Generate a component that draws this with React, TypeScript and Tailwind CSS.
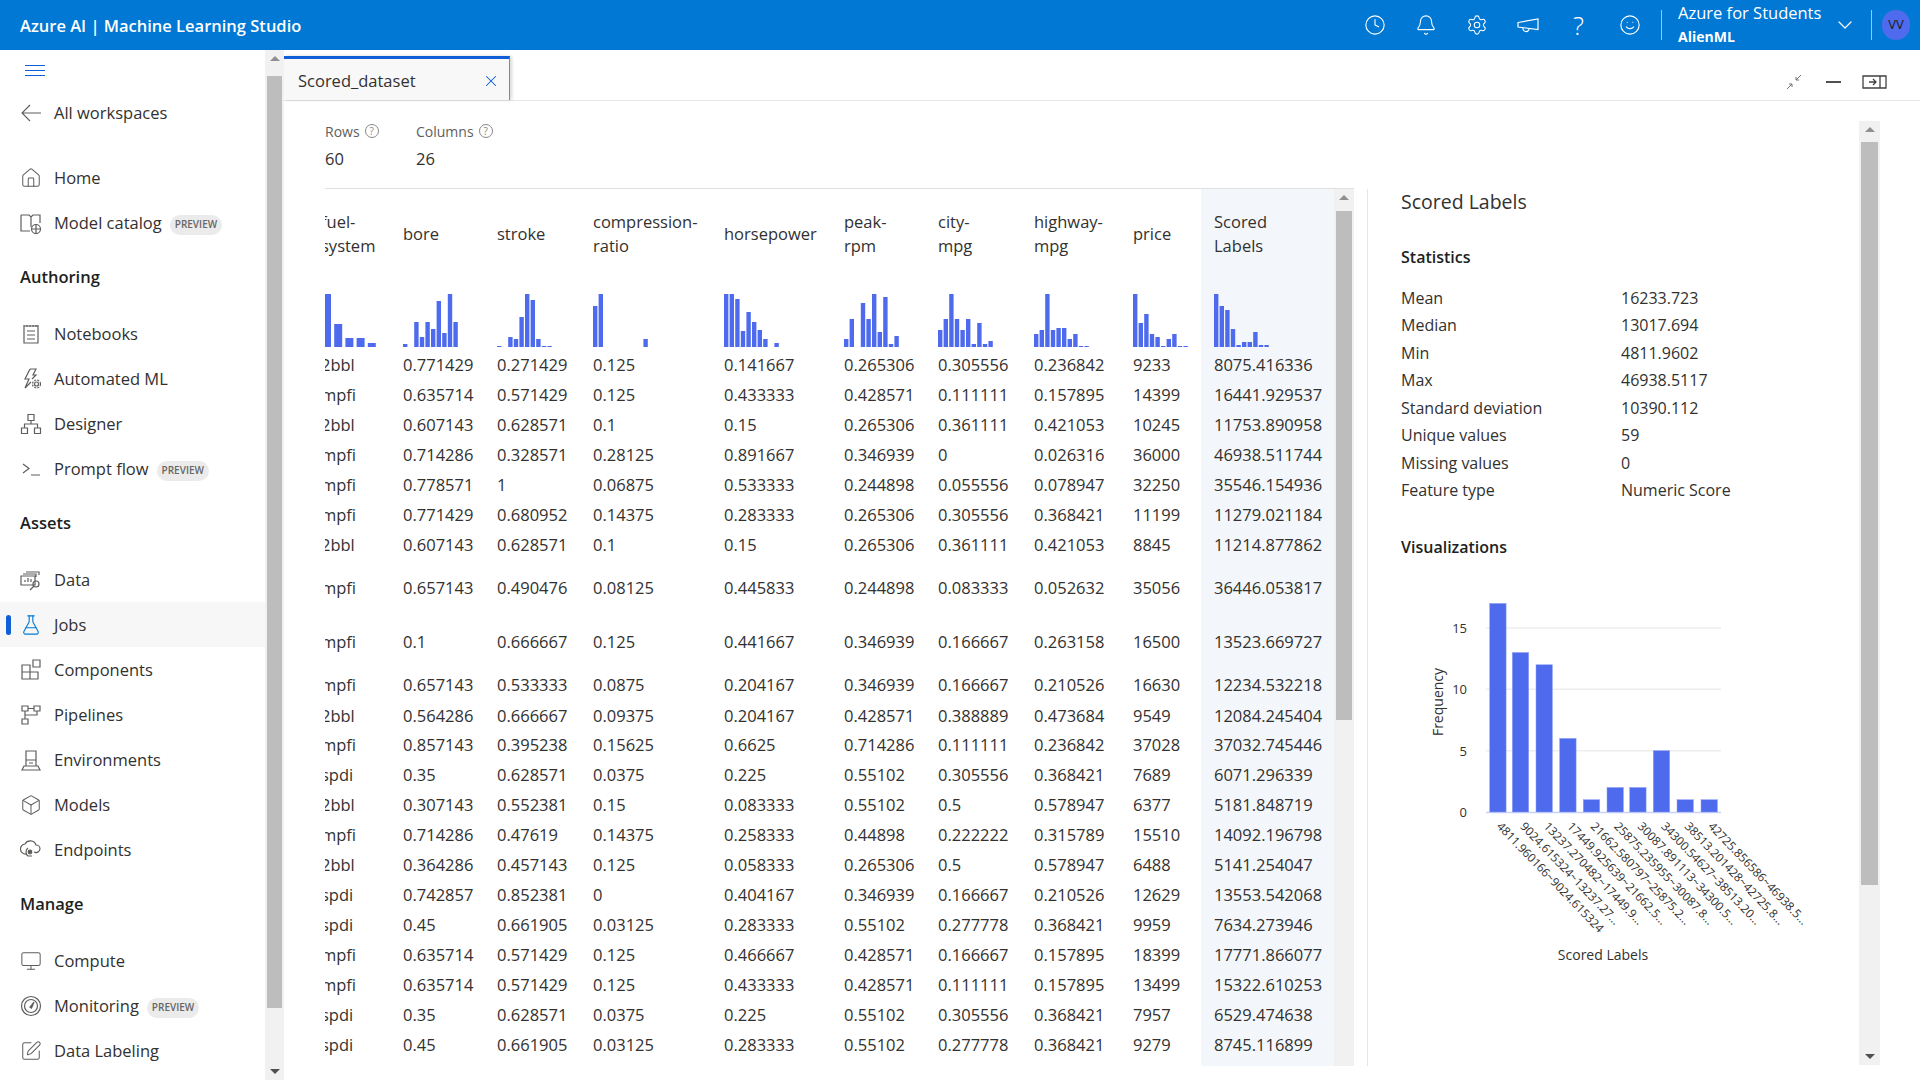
import { Clock, Bell, Settings, Smile, ChevronDown, Home, FlaskConical, Box, Monitor, SquarePen, X } from "lucide-react";
import type { ReactNode } from "react";

const ic = { fill: "none", stroke: "#5f5e5c", strokeWidth: 1.2 };

function Ico({ children }: { children: ReactNode }) {
    return (
        <svg width="22" height="22" viewBox="0 0 22 22" {...ic}>
            {children}
        </svg>
    );
}

const NotebookIcon = () => (
    <Ico>
        <path d="M4 3h14v17H4zM4 2v2M7 2v2M10 2v2M13 2v2M16 2v2M18 2v2M7 8h8M7 12h8M7 16h8" />
    </Ico>
);
const AutoMlIcon = () => (
    <Ico>
        <path d="M10 1h6l-3 6h3l-4 4M10 1L5 11h4l-4 9 6-6" />
        <circle cx="16.5" cy="16" r="2" />
        <circle cx="16.5" cy="16" r="4" strokeDasharray="2 1.2" />
    </Ico>
);
const DesignerIcon = () => (
    <Ico>
        <path d="M8 1.5h6v6H8zM1.5 15h6v5.5h-6zM14.5 15h6v5.5h-6zM11 7.5V11M4.5 15v-4h13v4" />
    </Ico>
);
const PromptIcon = () => (
    <Ico>
        <path d="M3 6l6 4.5L3 15M11 17h9" />
    </Ico>
);
const DataIcon = () => (
    <Ico>
        <path d="M6 3h13v3M3 5h13v3M1 7h14v9H1zM5 13v-2M8 13V9M11 13v-3" />
        <circle cx="16" cy="15" r="3" />
        <path d="M14 17l-4 4" />
    </Ico>
);
const ComponentsIcon = () => (
    <Ico>
        <path d="M2 6h8v7H2zM10 6v7h8v7H2v-7M10 13v7" />
        <path d="M13 1h7v7h-7z" />
    </Ico>
);
const PipelinesIcon = () => (
    <Ico>
        <path d="M2 2h6v5H2zM14 2h6v5h-6zM2 15h6v5H2zM5 7v8M8 4.5h6M5 11h12V7" />
    </Ico>
);
const EnvIcon = () => (
    <Ico>
        <path d="M6 2h10v15H6zM6 11h10M9 14h4M2 21l2-4h14l2 4z" />
    </Ico>
);
const EndpointsIcon = () => (
    <Ico>
        <path d="M6 15a5 5 0 0 1-1-10 6 6 0 0 1 11 1 4 4 0 0 1 4 4 4 4 0 0 1-6 3" />
        <path d="M8 9a5 5 0 0 0 0 8h4" />
        <circle cx="10" cy="13" r="1.8" fill="#5f5e5c" />
    </Ico>
);
const GaugeIcon = () => (
    <Ico>
        <circle cx="11" cy="11" r="9.5" />
        <circle cx="11" cy="11" r="6.5" />
        <path d="M10 12l4-5-2.5 6z" fill="#5f5e5c" />
    </Ico>
);
const CatalogIcon = () => (
    <Ico>
        <path d="M1 3h8l2 2 2-2h7v8M11 5v10M1 3v16h9" />
        <circle cx="16" cy="17" r="4.5" />
        <path d="M16 12.5v9M11.5 17h9" />
    </Ico>
);

type NavItem = { label: string; icon: ReactNode; preview?: boolean; active?: boolean };

const s = { size: 22, strokeWidth: 1.1, color: "#5f5e5c" };

const authoring: NavItem[] = [
    { label: "Notebooks", icon: <NotebookIcon /> },
    { label: "Automated ML", icon: <AutoMlIcon /> },
    { label: "Designer", icon: <DesignerIcon /> },
    { label: "Prompt flow", icon: <PromptIcon />, preview: true },
];
const assets: NavItem[] = [
    { label: "Data", icon: <DataIcon /> },
    { label: "Jobs", icon: <FlaskConical size={22} strokeWidth={1.2} color="#0078d4" />, active: true },
    { label: "Components", icon: <ComponentsIcon /> },
    { label: "Pipelines", icon: <PipelinesIcon /> },
    { label: "Environments", icon: <EnvIcon /> },
    { label: "Models", icon: <Box {...s} /> },
    { label: "Endpoints", icon: <EndpointsIcon /> },
];
const manage: NavItem[] = [
    { label: "Compute", icon: <Monitor {...s} /> },
    { label: "Monitoring", icon: <GaugeIcon />, preview: true },
    { label: "Data Labeling", icon: <SquarePen {...s} /> },
];

function Badge() {
    return (
        <span className="ml-[8px] mt-[4px] flex h-[20px] items-center rounded-full bg-[#ebebeb] px-[5px] text-[10px] font-semibold text-[#666666]">
            PREVIEW
        </span>
    );
}

function NavRow({ item }: { item: NavItem }) {
    return (
        <div className={`relative flex h-[45px] items-center ${item.active ? "bg-[#f7f7f7]" : ""}`}>
            {item.active && <div className="absolute left-[6px] top-[13px] h-[20px] w-[5px] rounded-full bg-[#0f5fd7]" />}
            <div className="flex w-[54px] shrink-0 justify-center pl-[8px]">{item.icon}</div>
            <span className="pt-[1px] text-[16.5px] text-[#323130]">{item.label}</span>
            {item.preview && <Badge />}
        </div>
    );
}

function NavHeading({ label }: { label: string }) {
    return <div className="flex h-[66px] items-center pb-[1px] pl-[20px] text-[16.5px] font-semibold text-[#201f1e]">{label}</div>;
}

function Sidebar() {
    return (
        <aside className="flex h-full w-[265px] shrink-0 flex-col overflow-hidden">
            <div className="flex h-[40px] items-center pl-[25px]">
                <div className="flex w-[20px] flex-col gap-[4px]">
                    <div className="h-px bg-[#0f5fd7]" />
                    <div className="h-px bg-[#0f5fd7]" />
                    <div className="h-px bg-[#0f5fd7]" />
                </div>
            </div>
            <div className="flex h-[45px] items-center">
                <div className="flex w-[54px] shrink-0 pl-[21px]">
                    <svg width="21" height="18" viewBox="0 0 21 18" fill="none" stroke="#5f5e5c" strokeWidth="1.1">
                        <path d="M20 9H1M9 1L1 9l8 8" />
                    </svg>
                </div>
                <span className="pt-[1px] text-[16.5px] text-[#323130]">All workspaces</span>
            </div>
            <div className="h-[20px] shrink-0" />
            <NavRow item={{ label: "Home", icon: <Home {...s} /> }} />
            <NavRow item={{ label: "Model catalog", icon: <CatalogIcon />, preview: true }} />
            <NavHeading label="Authoring" />
            {authoring.map((i) => (
                <NavRow key={i.label} item={i} />
            ))}
            <NavHeading label="Assets" />
            {assets.map((i) => (
                <NavRow key={i.label} item={i} />
            ))}
            <NavHeading label="Manage" />
            {manage.map((i) => (
                <NavRow key={i.label} item={i} />
            ))}
        </aside>
    );
}

function Scrollbar({ thumbTop, thumbHeight, down }: { thumbTop: number; thumbHeight: number; down?: boolean }) {
    return (
        <div className="relative h-full w-full bg-[#f1f1f1]">
            <div className="absolute left-1/2 top-[6px] h-0 w-0 -translate-x-1/2 border-x-[5px] border-b-[5px] border-x-transparent border-b-[#8f8f8f]" />
            <div className="absolute inset-x-[2px] bg-[#bdbdbd]" style={{ top: thumbTop, height: thumbHeight }} />
            {down && (
                <div className="absolute bottom-[6px] left-1/2 h-0 w-0 -translate-x-1/2 border-x-[5px] border-t-[5px] border-x-transparent border-t-[#505050]" />
            )}
        </div>
    );
}

const columns = [
    { title: ["fuel-", "system"], w: "w-[82px]", bars: [53, 23, 9, 9, 4], step: 11.2, bw: 8, x0: 2 },
    { title: ["bore"], w: "w-[94px]", bars: [3, 0, 25, 10, 25, 18, 46, 14, 53, 25] },
    { title: ["stroke"], w: "w-[96px]", bars: [1, 0, 10, 8, 30, 53, 47, 8, 1, 1] },
    { title: ["compression-", "ratio"], w: "w-[131px]", bars: [41, 53, 0, 0, 0, 0, 0, 0, 0, 8] },
    { title: ["horsepower"], w: "w-[120px]", bars: [53, 53, 48, 16, 35, 25, 17, 8, 0, 4] },
    { title: ["peak-", "rpm"], w: "w-[94px]", bars: [8, 28, 0, 44, 28, 53, 15, 50, 3, 11] },
    { title: ["city-", "mpg"], w: "w-[96px]", bars: [17, 28, 53, 28, 17, 28, 3, 24, 3, 6] },
    { title: ["highway-", "mpg"], w: "w-[99px]", bars: [13, 17, 53, 17, 19, 19, 8, 13, 1, 1] },
    { title: ["price"], w: "w-[81px]", bars: [53, 24, 33, 13, 10, 1, 8, 13, 1, 1] },
    { title: ["Scored", "Labels"], w: "w-[133px]", bars: [53, 41, 37, 18, 2, 5, 5, 15, 2, 2] },
];

const rows: { h: string; v: string[] }[] = [
    { h: "h-[30px]", v: ["2bbl", "0.771429", "0.271429", "0.125", "0.141667", "0.265306", "0.305556", "0.236842", "9233", "8075.416336"] },
    { h: "h-[30px]", v: ["mpfi", "0.635714", "0.571429", "0.125", "0.433333", "0.428571", "0.111111", "0.157895", "14399", "16441.929537"] },
    { h: "h-[30px]", v: ["2bbl", "0.607143", "0.628571", "0.1", "0.15", "0.265306", "0.361111", "0.421053", "10245", "11753.890958"] },
    { h: "h-[30px]", v: ["mpfi", "0.714286", "0.328571", "0.28125", "0.891667", "0.346939", "0", "0.026316", "36000", "46938.511744"] },
    { h: "h-[30px]", v: ["mpfi", "0.778571", "1", "0.06875", "0.533333", "0.244898", "0.055556", "0.078947", "32250", "35546.154936"] },
    { h: "h-[30px]", v: ["mpfi", "0.771429", "0.680952", "0.14375", "0.283333", "0.265306", "0.305556", "0.368421", "11199", "11279.021184"] },
    { h: "h-[30px]", v: ["2bbl", "0.607143", "0.628571", "0.1", "0.15", "0.265306", "0.361111", "0.421053", "8845", "11214.877862"] },
    { h: "h-[56px]", v: ["mpfi", "0.657143", "0.490476", "0.08125", "0.445833", "0.244898", "0.083333", "0.052632", "35056", "36446.053817"] },
    { h: "h-[52px]", v: ["mpfi", "0.1", "0.666667", "0.125", "0.441667", "0.346939", "0.166667", "0.263158", "16500", "13523.669727"] },
    { h: "h-[34px]", v: ["mpfi", "0.657143", "0.533333", "0.0875", "0.204167", "0.346939", "0.166667", "0.210526", "16630", "12234.532218"] },
    { h: "h-[28px]", v: ["2bbl", "0.564286", "0.666667", "0.09375", "0.204167", "0.428571", "0.388889", "0.473684", "9549", "12084.245404"] },
    { h: "h-[30px]", v: ["mpfi", "0.857143", "0.395238", "0.15625", "0.6625", "0.714286", "0.111111", "0.236842", "37028", "37032.745446"] },
    { h: "h-[30px]", v: ["spdi", "0.35", "0.628571", "0.0375", "0.225", "0.55102", "0.305556", "0.368421", "7689", "6071.296339"] },
    { h: "h-[30px]", v: ["2bbl", "0.307143", "0.552381", "0.15", "0.083333", "0.55102", "0.5", "0.578947", "6377", "5181.848719"] },
    { h: "h-[30px]", v: ["mpfi", "0.714286", "0.47619", "0.14375", "0.258333", "0.44898", "0.222222", "0.315789", "15510", "14092.196798"] },
    { h: "h-[30px]", v: ["2bbl", "0.364286", "0.457143", "0.125", "0.058333", "0.265306", "0.5", "0.578947", "6488", "5141.254047"] },
    { h: "h-[30px]", v: ["spdi", "0.742857", "0.852381", "0", "0.404167", "0.346939", "0.166667", "0.210526", "12629", "13553.542068"] },
    { h: "h-[30px]", v: ["spdi", "0.45", "0.661905", "0.03125", "0.283333", "0.55102", "0.277778", "0.368421", "9959", "7634.273946"] },
    { h: "h-[30px]", v: ["mpfi", "0.635714", "0.571429", "0.125", "0.466667", "0.428571", "0.166667", "0.157895", "18399", "17771.866077"] },
    { h: "h-[30px]", v: ["mpfi", "0.635714", "0.571429", "0.125", "0.433333", "0.428571", "0.111111", "0.157895", "13499", "15322.610253"] },
    { h: "h-[30px]", v: ["spdi", "0.35", "0.628571", "0.0375", "0.225", "0.55102", "0.305556", "0.368421", "7957", "6529.474638"] },
    { h: "h-[30px]", v: ["spdi", "0.45", "0.661905", "0.03125", "0.283333", "0.55102", "0.277778", "0.368421", "9279", "8745.116899"] },
    { h: "h-[30px]", v: ["", "", "", "", "", "", "", "", "", ""] },
];

function Spark({ bars, step = 5.6, bw = 4.4, x0 = 0 }: { bars: number[]; step?: number; bw?: number; x0?: number }) {
    return (
        <svg width="70" height="53" viewBox="0 0 70 53" className="block">
            {bars.map((h, i) => (
                <rect key={i} x={x0 + i * step} y={53 - h} width={bw} height={h} fill="#4f6bed" />
            ))}
        </svg>
    );
}

function DataTable() {
    return (
        <div className="h-full w-full overflow-hidden">
            <table className="-ml-[17px] w-[1026px] table-fixed border-collapse text-[16.5px] text-[#323130]">
                <colgroup>
                    {columns.map((c) => (
                        <col key={c.title[0]} className={c.w} />
                    ))}
                </colgroup>
                <thead>
                    <tr className="h-[91px]">
                        {columns.map((c, i) => (
                            <th key={c.title[0]} className={`pb-[2px] pl-[13px] text-left align-middle font-normal leading-[24px] ${i === 9 ? "bg-[#f3f7fb]" : ""}`}>
                                {c.title.map((t) => (
                                    <div key={t}>{t}</div>
                                ))}
                            </th>
                        ))}
                    </tr>
                    <tr className="h-[71px]">
                        {columns.map((c, i) => (
                            <th key={c.title[0]} className={`pb-[4px] pl-[13px] align-bottom font-normal ${i === 9 ? "bg-[#f3f7fb]" : ""}`}>
                                <Spark bars={c.bars} step={c.step} bw={c.bw} x0={c.x0} />
                            </th>
                        ))}
                    </tr>
                </thead>
                <tbody>
                    {rows.map((r, ri) => (
                        <tr key={ri} className={r.h}>
                            {r.v.map((v, i) => (
                                <td key={i} className={`pb-[1px] pl-[13px] align-middle leading-none whitespace-nowrap ${i === 9 ? "bg-[#f3f7fb]" : ""}`}>
                                    {v}
                                </td>
                            ))}
                        </tr>
                    ))}
                </tbody>
            </table>
        </div>
    );
}

const stats = [
    ["Mean", "16233.723"],
    ["Median", "13017.694"],
    ["Min", "4811.9602"],
    ["Max", "46938.5117"],
    ["Standard deviation", "10390.112"],
    ["Unique values", "59"],
    ["Missing values", "0"],
    ["Feature type", "Numeric Score"],
];

const histogram = [17, 13, 12, 6, 1, 2, 2, 5, 1, 1];
const barX = [89.7, 112.3, 136, 159.7, 183.3, 207, 229.7, 253.3, 277, 301];
const binLabels = [
    "4811.960166~9024.615324",
    "9024.615324~13237.27...",
    "13237.270482~17449.9...",
    "17449.925639~21662.5...",
    "21662.580797~25875.2...",
    "25875.235955~30087.8...",
    "30087.891113~34300.5...",
    "34300.54627~38513.20...",
    "38513.201428~42725.8...",
    "42725.856586~46938.5...",
];

function Histogram() {
    // chart origin is x=1400, y=580 on the page
    const base = 232;
    const unit = 12.27;
    return (
        <svg width="420" height="400" viewBox="0 0 420 400" className="block" fontFamily="'Open Sans', sans-serif">
            {[5, 10, 15].map((t) => (
                <line key={t} x1="86" x2="321" y1={base - t * unit} y2={base - t * unit} stroke="#eeeeee" strokeWidth="1.5" />
            ))}
            <line x1="86" x2="321" y1={base + 0.5} y2={base + 0.5} stroke="#c9d2f7" strokeWidth="1.5" />
            {histogram.map((h, i) => (
                <rect key={i} x={barX[i]} y={base - h * unit} width="16.4" height={h * unit} fill="#4f6bed" stroke="#8da0f3" strokeWidth="0.5" />
            ))}
            {[0, 5, 10, 15].map((t) => (
                <text key={t} x="67" y={base - t * unit + 5} textAnchor="end" fontSize="13" fill="#323130">
                    {t}
                </text>
            ))}
            <text transform="rotate(-90 43 122)" x="43" y="122" textAnchor="middle" fontSize="14" fill="#323130">
                Frequency
            </text>
            {binLabels.map((l, i) => (
                <text key={l} transform={`rotate(46 ${96 + i * 23.5} 247)`} x={96 + i * 23.5} y="247" fontSize="11.8" fill="#323130">
                    {l}
                </text>
            ))}
            <text x="203" y="380" textAnchor="middle" fontSize="14" fill="#323130">
                Scored Labels
            </text>
        </svg>
    );
}

function HelpDot() {
    return (
        <span className="ml-[5px] inline-flex h-[14px] w-[14px] items-center justify-center rounded-full border border-[#8a8886] text-[10px] leading-none text-[#8a8886]">
            ?
        </span>
    );
}

function DetailPanel() {
    return (
        <div className="pl-[33px]">
            <div className="pt-[1px] text-[19.5px] leading-[24px] text-[#323130]">Scored Labels</div>
            <div className="mt-[31px] text-[16px] font-semibold leading-[24px] text-[#201f1e]">Statistics</div>
            <div className="mt-[15px] flex flex-col">
                {stats.map(([k, v]) => (
                    <div key={k} className="flex h-[27.5px] items-center text-[16px] text-[#323130]">
                        <div className="w-[220px]">{k}</div>
                        <div>{v}</div>
                    </div>
                ))}
            </div>
            <div className="mt-[31px] text-[16px] font-semibold leading-[24px] text-[#201f1e]">Visualizations</div>
            <div className="-ml-[1px] mt-[21px]">
                <Histogram />
            </div>
        </div>
    );
}

export default function App() {
    return (
        <div className="flex h-[1080px] w-[1920px] flex-col overflow-hidden bg-white font-['Open_Sans',sans-serif]">
            <header className="flex h-[50px] shrink-0 items-center bg-[#0078d4] text-white">
                <div className="pl-[20px] pt-[2px] text-[16.5px] font-semibold">Azure AI | Machine Learning Studio</div>
                <div className="ml-auto flex items-center">
                    <div className="flex w-[51px] justify-center"><Clock size={22} strokeWidth={1.2} /></div>
                    <div className="flex w-[51px] justify-center"><Bell size={22} strokeWidth={1.2} /></div>
                    <div className="flex w-[51px] justify-center"><Settings size={22} strokeWidth={1.2} /></div>
                    <div className="flex w-[51px] justify-center">
                        <svg width="22" height="22" viewBox="0 0 22 22" fill="none" stroke="white" strokeWidth="1.2">
                            <path d="M1 8.5L21 5v10.5L1 13zM6 14a3 3 0 0 0 6 1" />
                        </svg>
                    </div>
                    <div className="flex w-[51px] justify-center text-[26px] font-light leading-none">?</div>
                    <div className="flex w-[51px] justify-center"><Smile size={22} strokeWidth={1.2} /></div>
                    <div className="ml-[6px] h-[30px] w-px bg-[#9cc8ea]" />
                    <div className="ml-[16px] flex w-[149px] flex-col justify-center">
                        <div className="text-[16.5px] leading-[24px]">Azure for Students</div>
                        <div className="text-[14px] font-bold leading-[24px]">AlienML</div>
                    </div>
                    <ChevronDown size={24} strokeWidth={1.2} className="ml-[6px]" />
                    <div className="ml-[14px] h-[30px] w-px bg-[#9cc8ea]" />
                    <div className="ml-[10px] mr-[10px] flex h-[30px] w-[28px] items-center justify-center rounded-full bg-[#4f6bed] text-[13px] text-[#1b1a19]">
                        VV
                    </div>
                </div>
            </header>
            <div className="flex min-h-0 flex-1">
                <Sidebar />
                <div className="w-[19px] shrink-0">
                    <Scrollbar thumbTop={26} thumbHeight={932} down />
                </div>
                <main className="flex min-w-0 flex-1 flex-col">
                    <div className="flex h-[51px] shrink-0 items-end border-b border-[#e6e6e6]">
                        <div className="flex h-[44px] w-[226px] items-center justify-between border-t-[3px] border-r border-t-[#0f5fd7] border-r-[#8a8886] bg-[#f8f8f8] pl-[14px] pr-[9px] pt-[3px] shadow-[2px_0_3px_rgba(0,0,0,0.15)]">
                            <span className="text-[16.5px] text-[#323130]">Scored_dataset</span>
                            <X size={18} strokeWidth={1.4} color="#0f5fd7" />
                        </div>
                        <div className="ml-auto flex h-[44px] items-center pr-[33px] pt-[8px]">
                            <svg width="16" height="16" viewBox="0 0 16 16" fill="none" stroke="#707070" strokeWidth="1">
                                <path d="M1 15l5-5M3 10h3v3M15 1l-5 5M10 3v3h3" />
                            </svg>
                            <div className="ml-[24px] h-[1.5px] w-[15px] bg-[#505050]" />
                            <svg width="25" height="14" viewBox="0 0 25 14" fill="none" stroke="#404040" strokeWidth="1.3" className="ml-[21px]">
                                <path d="M1 1h23v12H1zM18 1v12M7 7h7M11 4l3 3-3 3" />
                            </svg>
                        </div>
                    </div>
                    <div className="flex min-h-0 flex-1 pl-[41px]">
                        <div className="flex w-[1029px] shrink-0 flex-col">
                            <div className="flex h-[88px] shrink-0 gap-[30px] border-b border-[#e0e0e0] pt-[20px]">
                                <div className="w-[61px]">
                                    <div className="flex h-[20px] items-center text-[14px] text-[#605e5c]">Rows<HelpDot /></div>
                                    <div className="mt-[6px] text-[16.5px] leading-[24px] text-[#323130]">60</div>
                                </div>
                                <div>
                                    <div className="flex h-[20px] items-center text-[14px] text-[#605e5c]">Columns<HelpDot /></div>
                                    <div className="mt-[6px] text-[16.5px] leading-[24px] text-[#323130]">26</div>
                                </div>
                            </div>
                            <div className="flex h-[877px] shrink-0">
                                <div className="w-[1009px] shrink-0">
                                    <DataTable />
                                </div>
                                <div className="w-[20px] shrink-0">
                                    <Scrollbar thumbTop={22} thumbHeight={509} />
                                </div>
                            </div>
                        </div>
                        <div className="mt-[88px] ml-[13px] h-[877px] w-px shrink-0 bg-[#e6e6e6]" />
                        <div className="mt-[88px] w-[491px] shrink-0 overflow-hidden">
                            <DetailPanel />
                        </div>
                        <div className="mt-[20px] h-[944px] w-[21px] shrink-0">
                            <Scrollbar thumbTop={21} thumbHeight={743} down />
                        </div>
                    </div>
                </main>
            </div>
        </div>
    );
}
